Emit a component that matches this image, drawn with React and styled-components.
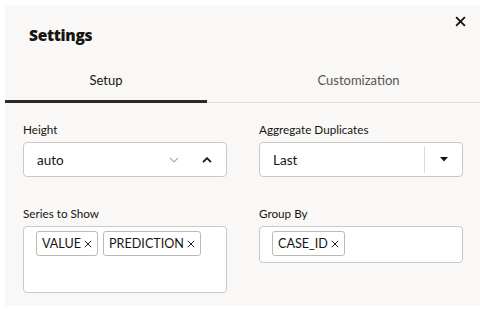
import React from "react";
import styled, { createGlobalStyle } from "styled-components";

const Global = createGlobalStyle`
  html, body { margin: 0; padding: 0; background: #ffffff; }
  body { font-family: "Lato", "Noto Sans", sans-serif; color: #161513; }
  * { box-sizing: border-box; }
`;

const Frame = styled.div`
  width: 480px;
  height: 310px;
  padding: 5px 0 4px 5px;
  background: #ffffff;
`;

const Panel = styled.div`
  height: 100%;
  background: #f9f8f6;
  display: flex;
  flex-direction: column;
  position: relative;
`;

const Header = styled.div`
  display: flex;
  align-items: center;
  height: 54px;
  padding: 5px 0 0 24px;
`;

const Title = styled.h1`
  margin: 0;
  font-family: "Open Sans", "Noto Sans", sans-serif;
  font-weight: 800;
  font-size: 15.5px;
  letter-spacing: -0.3px;
  color: #161513;
`;

const CloseButton = styled.button`
  position: absolute;
  top: 4px;
  right: 8px;
  width: 24px;
  height: 24px;
  border: none;
  background: transparent;
  padding: 0;
  display: flex;
  align-items: center;
  justify-content: center;
  cursor: pointer;
`;

const TabList = styled.div`
  display: flex;
  height: 44px;
  border-bottom: 1px solid #e3e1de;
`;

const Tab = styled.div`
  flex: ${(p) => (p.$grow ? "1" : "0 0 202px")};
  display: flex;
  align-items: center;
  justify-content: center;
  font-size: 13px;
  color: ${(p) => (p.$active ? "#161513" : "#58554f")};
  border-bottom: ${(p) => (p.$active ? "3px solid #2b2a28" : "none")};
  margin-bottom: -1px;
  padding-top: ${(p) => (p.$active ? "1px" : "0")};
  padding-bottom: ${(p) => (p.$active ? "0" : "2px")};
  padding-left: ${(p) => (p.$grow ? "30px" : "0")};
`;

const Form = styled.div`
  display: grid;
  grid-template-columns: 204px 204px;
  column-gap: 32px;
  row-gap: 28px;
  padding: 18px 0 0 18px;
  align-items: start;
`;

const Field = styled.div`
  display: flex;
  flex-direction: column;
`;

const Label = styled.div`
  font-size: 11.7px;
  line-height: 16px;
  height: 16px;
  margin-bottom: 5px;
  color: #161513;
`;

const Box = styled.div`
  background: #ffffff;
  border: 1px solid #cbc9c6;
  border-radius: 4px;
  height: ${(p) => p.$h}px;
  display: flex;
  align-items: ${(p) => (p.$top ? "flex-start" : "center")};
`;

const Value = styled.div`
  flex: 1;
  font-size: 13.5px;
  padding-left: 13px;
  color: #161513;
`;

const IconSlot = styled.div`
  width: ${(p) => p.$w}px;
  height: 100%;
  display: flex;
  align-items: center;
  justify-content: center;
`;

const Divider = styled.div`
  width: 1px;
  height: 27px;
  background: #dddbd8;
`;

const ChipRow = styled.div`
  display: flex;
  flex-wrap: wrap;
  gap: 5px;
  padding: 4px 0 0 12px;
`;

const Chip = styled.div`
  height: 25px;
  display: flex;
  align-items: center;
  gap: 3px;
  padding: 0 5px;
  border: 1px solid #bdbab6;
  border-radius: 3px;
  background: #ffffff;
  font-size: 12.6px;
  color: #161513;
`;

const ChevDown = () => (
  <svg width="10" height="6" viewBox="0 0 10 6">
    <path d="M1 1 L5 5 L9 1" fill="none" stroke="#aeaca8" strokeWidth="1.1" />
  </svg>
);

const ChevUp = () => (
  <svg width="10" height="6" viewBox="0 0 10 6">
    <path d="M1 5.2 L5 1.2 L9 5.2" fill="none" stroke="#161513" strokeWidth="1.8" />
  </svg>
);

const Caret = () => (
  <svg width="8" height="5" viewBox="0 0 8 5">
    <path d="M0 0 L8 0 L4 4.5 Z" fill="#161513" />
  </svg>
);

const XIcon = ({ size = 7, sw = 1.1 }) => (
  <svg width={size} height={size} viewBox="0 0 10 10">
    <path d="M1 1 L9 9 M9 1 L1 9" stroke="#161513" strokeWidth={sw} fill="none" />
  </svg>
);

const Tag = ({ children }) => (
  <Chip>
    {children}
    <XIcon size={8} sw={1.2} />
  </Chip>
);

export default function App() {
  return (
    <>
      <Global />
      <Frame>
        <Panel>
          <Header>
            <Title>Settings</Title>
          </Header>
          <CloseButton aria-label="Close">
            <XIcon size={11} sw={1.7} />
          </CloseButton>
          <TabList>
            <Tab $active>Setup</Tab>
            <Tab $grow>Customization</Tab>
          </TabList>
          <Form>
            <Field>
              <Label>Height</Label>
              <Box $h={35}>
                <Value>auto</Value>
                <IconSlot $w={42}>
                  <ChevDown />
                </IconSlot>
                <IconSlot $w={24}>
                  <ChevUp />
                </IconSlot>
                <IconSlot $w={7} />
              </Box>
            </Field>
            <Field>
              <Label>Aggregate Duplicates</Label>
              <Box $h={35}>
                <Value>Last</Value>
                <Divider />
                <IconSlot $w={37}>
                  <Caret />
                </IconSlot>
              </Box>
            </Field>
            <Field>
              <Label>Series to Show</Label>
              <Box $h={67} $top>
                <ChipRow>
                  <Tag>VALUE</Tag>
                  <Tag>PREDICTION</Tag>
                </ChipRow>
              </Box>
            </Field>
            <Field>
              <Label>Group By</Label>
              <Box $h={37} $top>
                <ChipRow>
                  <Tag>CASE_ID</Tag>
                </ChipRow>
              </Box>
            </Field>
          </Form>
        </Panel>
      </Frame>
    </>
  );
}
